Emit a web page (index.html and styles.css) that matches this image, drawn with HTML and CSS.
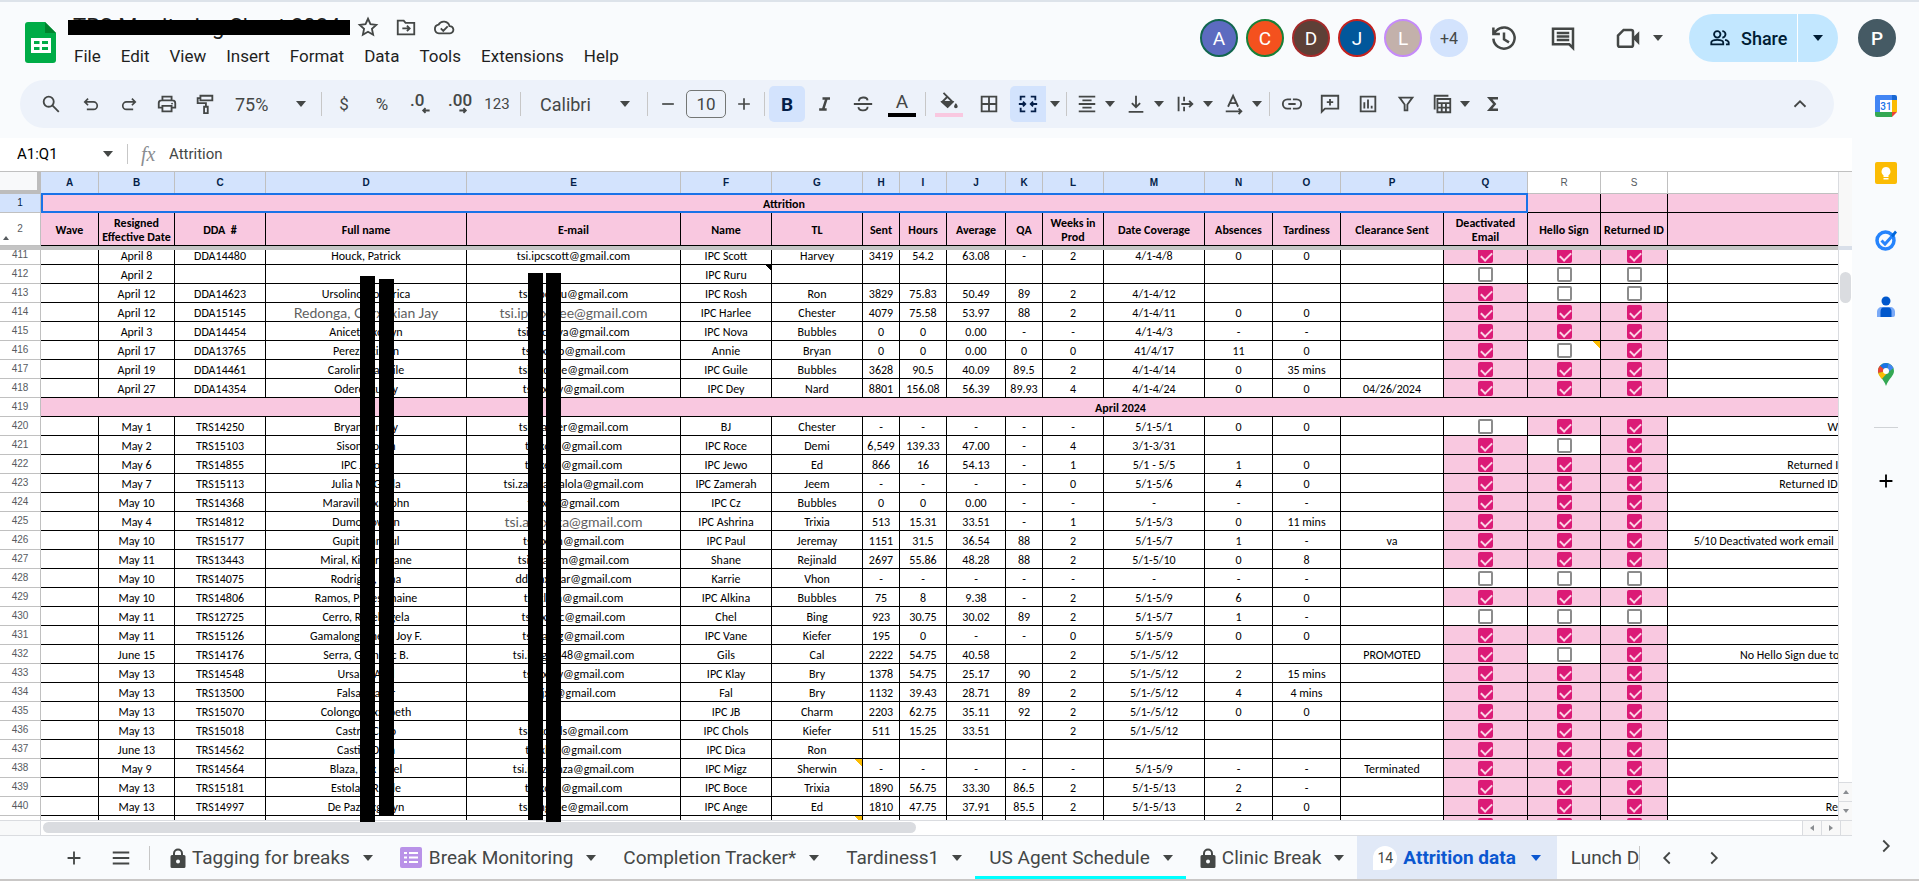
FILE: index.html
```html
<!DOCTYPE html>
<html lang="en">
<head>
  <meta charset="UTF-8" />
  <meta name="viewport" content="width=device-width, initial-scale=1.0"/>
  <title>TRS Monitoring Sheet 2024</title>
  <link rel="stylesheet" href="styles.css">
</head>
<body>

<svg class="sprite" aria-hidden="true">
  <symbol id="i-arrow" viewBox="0 0 10 6"><path d="M0 0h10L5 6z" fill="currentColor"/></symbol>
  <symbol id="i-search" viewBox="0 0 24 24"><circle cx="9.5" cy="9.5" r="5.5"/><path d="M13.5 13.5l7 7"/></symbol>
  <symbol id="i-undo" viewBox="0 0 24 24"><path d="M8.5 5.5l-4 4 4 4M5 9.5h10a4.5 4.5 0 0 1 0 9H7"/></symbol>
  <symbol id="i-redo" viewBox="0 0 24 24"><path d="M15.5 5.5l4 4-4 4M19 9.5H9a4.5 4.5 0 0 0 0 9h8"/></symbol>
  <symbol id="i-print" viewBox="0 0 24 24"><path d="M7 8V4h10v4M7 16H3v-5a3 3 0 0 1 3-3h12a3 3 0 0 1 3 3v5h-4M7 14h10v6H7z"/><circle cx="17.5" cy="11.5" r="1" fill="currentColor" stroke="none"/></symbol>
  <symbol id="i-paint" viewBox="0 0 24 24"><path d="M7 3h13v5H7zM7 5.5H4V11h9v4M11 15h4v7h-4z"/></symbol>
  <symbol id="i-minus" viewBox="0 0 24 24"><path d="M5 12h14"/></symbol>
  <symbol id="i-plus" viewBox="0 0 24 24"><path d="M5 12h14M12 5v14"/></symbol>
  <symbol id="i-dec" viewBox="0 0 24 24"><path d="M21 12H8M12 7l-5 5 5 5"/></symbol>
  <symbol id="i-inc" viewBox="0 0 24 24"><path d="M3 12h13M12 7l5 5-5 5"/></symbol>
  <symbol id="i-italic" viewBox="0 0 24 24"><path d="M9 5.5h9M5 18.5h9M14 5l-4.5 14" stroke-width="3"/></symbol>
  <symbol id="i-strike" viewBox="0 0 24 24"><path d="M2 12h20M7.5 9c0-5 9-5.5 9.5-1M7 15.5c.5 5 10 4.500 10-.5"/></symbol>
  <symbol id="i-fill" viewBox="0 0 24 24"><path d="M6 2l10 10-5.5 5.5L4.500 12l6-6"/><path d="M5 12h10.5l-5 5z" fill="currentColor"/><path d="M19.500 13s-2 2.500-2 3.800a2 2 0 0 0 4 0c0-1.300-2-3.800-2-3.800z" fill="currentColor" stroke="none"/></symbol>
  <symbol id="i-borders" viewBox="0 0 24 24"><path d="M4 4h16v16H4zM12 4v16M4 12h16"/></symbol>
  <symbol id="i-merge" viewBox="0 0 24 24"><path d="M9 4H4v4M4 16v4h5M15 4h5v4M20 16v4h-5M2 12h7M6.500 9.500L9 12l-2.500 2.500M22 12h-7M17.500 9.500L15 12l2.500 2.500"/></symbol>
  <symbol id="i-align" viewBox="0 0 24 24"><path d="M3 4h18M7 8h10M3 12h18M7 16h10M3 20h18"/></symbol>
  <symbol id="i-valign" viewBox="0 0 24 24"><path d="M12 3v12M7.500 11l4.500 4.500 4.500-4.500M4 20.500h16"/></symbol>
  <symbol id="i-wrap" viewBox="0 0 24 24"><path d="M5 4v16M11 4v5M11 15v5M8 12h12M16.500 8.500L20 12l-3.500 3.500"/></symbol>
  <symbol id="i-rotate" viewBox="0 0 24 24"><path d="M5.500 15L11 3l5.500 12M7.500 11h7M3 20h17M17 17l3 3-3 3"/></symbol>
  <symbol id="i-link" viewBox="0 0 24 24"><path d="M11 7H7a5 5 0 0 0 0 10h4M13 7h4a5 5 0 0 1 0 10h-4M8 12h8"/></symbol>
  <symbol id="i-addnote" viewBox="0 0 24 24"><path d="M3 20.500V3h18v14H6.500zM12 6.500v7M8.500 10h7"/></symbol>
  <symbol id="i-chart" viewBox="0 0 24 24"><path d="M4 4h16v16H4zM8 10v7M12 7v10M16 14v3"/></symbol>
  <symbol id="i-filter" viewBox="0 0 24 24"><path d="M5 5h14l-5.500 7.500V19h-3v-6.500z"/></symbol>
  <symbol id="i-views" viewBox="0 0 24 24"><path d="M4 18V3h15M7 6.500h14V21H7zM7 11h14M7 16h14M11.700 11v10M16.300 11v10"/></symbol>
  <symbol id="i-sigma" viewBox="0 0 24 24"><path d="M18 5H8l6 7-6 7h10" stroke-width="3"/></symbol>
  <symbol id="i-up" viewBox="0 0 24 24"><path d="M6 15l6-6 6 6"/></symbol>
  <symbol id="i-left" viewBox="0 0 24 24"><path d="M15 6l-6 6 6 6"/></symbol>
  <symbol id="i-right" viewBox="0 0 24 24"><path d="M9 6l6 6-6 6"/></symbol>
  <symbol id="i-star" viewBox="0 0 24 24"><path d="M12 3l2.700 6 6.300.7-4.700 4.300 1.300 6.400L12 17.200l-5.600 3.200L7.700 14 3 9.700 9.300 9z"/></symbol>
  <symbol id="i-folder" viewBox="0 0 24 24"><path d="M3 5h6.500l2 2.500H21V20H3zM8 13.500h8M13 10.500l3 3-3 3"/></symbol>
  <symbol id="i-cloud" viewBox="0 0 24 24"><path d="M6.500 19a4.800 4.800 0 0 1-.5-9.500A6.500 6.500 0 0 1 18 11a4 4 0 0 1 .5 8zM8.500 13.500l2.700 2.700 4.800-4.800"/></symbol>
  <symbol id="i-history" viewBox="0 0 24 24"><path d="M3.500 12.500a8.500 8.500 0 1 0 2.300-6.300L3.500 8.500M3.500 3.500v5.200h5.200M12 7.500V13l4 2.500"/></symbol>
  <symbol id="i-comment" viewBox="0 0 24 24"><path d="M4 4.500h16V20l-3-3H4zM7 8h10M7 10.800h10M7 13.600h10"/></symbol>
  <symbol id="i-video" viewBox="0 0 24 24"><path d="M8.500 5.500h6A1.500 1.500 0 0 1 16 7v10.500a1.500 1.500 0 0 1-1.500 1.500h-9A1.500 1.500 0 0 1 4 17.500V10z"/><path d="M16.500 11l4.500-4.500v11L16.500 13z" fill="currentColor" stroke="none"/></symbol>
  <symbol id="i-people" viewBox="0 0 24 24"><circle cx="9" cy="8" r="3.500"/><path d="M2.500 19v-2c0-4 13-4 13 0v2zM14.500 4.500a3.500 3.500 0 0 1 0 7M17.500 14c3 .7 4 1.500 4 3v2h-3"/></symbol>
  <symbol id="i-menu" viewBox="0 0 24 24"><path d="M3 6h18M3 12h18M3 18h18"/></symbol>
  <symbol id="i-lock" viewBox="0 0 16 20"><path d="M4 8V5.500a4 4 0 0 1 8 0V8" fill="none" stroke="currentColor" stroke-width="2"/><path fill="currentColor" fill-rule="evenodd" d="M2 7h12a1.500 1.500 0 0 1 1.500 1.500v10A1.500 1.500 0 0 1 14 20H2a1.500 1.500 0 0 1-1.500-1.500v-10A1.500 1.500 0 0 1 2 7zm6 4.500a2 2 0 1 0 0 4 2 2 0 0 0 0-4z"/></symbol>
</svg>

<header class="header">
  <svg class="logo" viewBox="0 0 31 41" role="img" aria-label="Sheets home">
    <path d="M3 0h17l11 11v27a3 3 0 0 1-3 3H3a3 3 0 0 1-3-3V3a3 3 0 0 1 3-3z" fill="#00ac47"/>
    <path d="M20 0l11 11H20z" fill="#00832d"/>
    <path d="M6 16h20v15H6zm3 3v3h5.500v-3zm8 0v3H23v-3zm-8 6v3h5.500v-3zm8 0v3H23v-3z" fill="#fff" fill-rule="evenodd"/>
  </svg>
  <div class="doc">
    <div class="title-row">
      <h1 class="title">TRS Monitoring Sheet 2024</h1>
      <button class="plain" aria-label="Star"><svg class="icon"><use href="#i-star"/></svg></button>
      <button class="plain" aria-label="Move"><svg class="icon"><use href="#i-folder"/></svg></button>
      <button class="plain" aria-label="Document status"><svg class="icon"><use href="#i-cloud"/></svg></button>
    </div>
    <nav class="menu">
      <button>File</button>
      <button>Edit</button>
      <button>View</button>
      <button>Insert</button>
      <button>Format</button>
      <button>Data</button>
      <button>Tools</button>
      <button>Extensions</button>
      <button>Help</button>
    </nav>
  </div>
  <div class="people">
    <span class="avatar indigo">A</span>
    <span class="avatar orange">C</span>
    <span class="avatar brown">D</span>
    <span class="avatar blue">J</span>
    <span class="avatar taupe">L</span>
    <span class="avatar more">+4</span>
  </div>
  <div class="actions">
    <button class="plain" aria-label="Version history"><svg class="icon big"><use href="#i-history"/></svg></button>
    <button class="plain" aria-label="Comments"><svg class="icon big"><use href="#i-comment"/></svg></button>
    <button class="plain call" aria-label="Join a call"><svg class="icon big"><use href="#i-video"/></svg><svg class="arrow"><use href="#i-arrow"/></svg></button>
  </div>
  <div class="share">
    <button class="share-main"><svg class="icon"><use href="#i-people"/></svg>Share</button>
    <button class="share-more" aria-label="Share options"><svg class="arrow"><use href="#i-arrow"/></svg></button>
  </div>
  <button class="avatar profile" aria-label="Account">P</button>
</header>

<div class="layout">
  <main class="main">
    <div class="toolbar" role="toolbar">
      <button class="tool wide" aria-label="Search menus"><svg class="icon"><use href="#i-search"/></svg></button>
      <button class="tool" aria-label="Undo"><svg class="icon small"><use href="#i-undo"/></svg></button>
      <button class="tool" aria-label="Redo"><svg class="icon small"><use href="#i-redo"/></svg></button>
      <button class="tool" aria-label="Print"><svg class="icon"><use href="#i-print"/></svg></button>
      <button class="tool" aria-label="Paint format"><svg class="icon"><use href="#i-paint"/></svg></button>
      <div class="select zoom">
        <select aria-label="Zoom"><option>75%</option><option>100%</option></select>
        <svg class="arrow"><use href="#i-arrow"/></svg>
      </div>
      <span class="sep"></span>
      <button class="tool" aria-label="Format as currency">$</button>
      <button class="tool" aria-label="Format as percent">%</button>
      <button class="tool decimal" aria-label="Decrease decimal places">.0<svg class="icon"><use href="#i-dec"/></svg></button>
      <button class="tool decimal" aria-label="Increase decimal places">.00<svg class="icon"><use href="#i-inc"/></svg></button>
      <button class="tool medium num" aria-label="More formats">123</button>
      <span class="sep"></span>
      <div class="select font">
        <select aria-label="Font"><option>Calibri</option><option>Arial</option></select>
        <svg class="arrow"><use href="#i-arrow"/></svg>
      </div>
      <span class="sep"></span>
      <button class="tool narrow" aria-label="Decrease font size"><svg class="icon small"><use href="#i-minus"/></svg></button>
      <input class="size" type="text" value="10" aria-label="Font size">
      <button class="tool narrow" aria-label="Increase font size"><svg class="icon small"><use href="#i-plus"/></svg></button>
      <span class="sep"></span>
      <button class="tool on bold" aria-label="Bold">B</button>
      <button class="tool" aria-label="Italic"><svg class="icon small"><use href="#i-italic"/></svg></button>
      <button class="tool" aria-label="Strikethrough"><svg class="icon"><use href="#i-strike"/></svg></button>
      <button class="tool medium swatch black" aria-label="Text color">A</button>
      <span class="sep"></span>
      <button class="tool medium swatch pink" aria-label="Fill color"><svg class="icon"><use href="#i-fill"/></svg></button>
      <button class="tool medium" aria-label="Borders"><svg class="icon"><use href="#i-borders"/></svg></button>
      <button class="tool on merge" aria-label="Merge cells"><svg class="icon"><use href="#i-merge"/></svg></button>
      <button class="tool drop" aria-label="Merge type"><svg class="arrow"><use href="#i-arrow"/></svg></button>
      <span class="sep"></span>
      <button class="tool combo" aria-label="Horizontal align"><svg class="icon"><use href="#i-align"/></svg><svg class="arrow"><use href="#i-arrow"/></svg></button>
      <button class="tool combo" aria-label="Vertical align"><svg class="icon"><use href="#i-valign"/></svg><svg class="arrow"><use href="#i-arrow"/></svg></button>
      <button class="tool combo" aria-label="Text wrapping"><svg class="icon"><use href="#i-wrap"/></svg><svg class="arrow"><use href="#i-arrow"/></svg></button>
      <button class="tool combo" aria-label="Text rotation"><svg class="icon"><use href="#i-rotate"/></svg><svg class="arrow"><use href="#i-arrow"/></svg></button>
      <span class="sep"></span>
      <button class="tool" aria-label="Insert link"><svg class="icon"><use href="#i-link"/></svg></button>
      <button class="tool" aria-label="Insert comment"><svg class="icon"><use href="#i-addnote"/></svg></button>
      <button class="tool" aria-label="Insert chart"><svg class="icon"><use href="#i-chart"/></svg></button>
      <button class="tool" aria-label="Create a filter"><svg class="icon"><use href="#i-filter"/></svg></button>
      <button class="tool combo" aria-label="Filter views"><svg class="icon"><use href="#i-views"/></svg><svg class="arrow"><use href="#i-arrow"/></svg></button>
      <button class="tool" aria-label="Functions"><svg class="icon small"><use href="#i-sigma"/></svg></button>
      <button class="tool collapse" aria-label="Hide the menus"><svg class="icon"><use href="#i-up"/></svg></button>
    </div>

    <div class="formula">
      <input class="name-box" type="text" value="A1:Q1" aria-label="Name box">
      <button class="plain" aria-label="Named ranges"><svg class="arrow"><use href="#i-arrow"/></svg></button>
      <span class="sep"></span>
      <label class="fx" for="fx">fx</label>
      <input class="fx-input" id="fx" type="text" value="Attrition">
    </div>

    <div class="sheet">
      <div class="grid">
        <table class="cells frozen" id="frozen"></table>
        <div class="freeze"></div>
        <div class="scroll">
          <table class="cells" id="rows"></table>
        </div>
      </div>
      <div class="vscroll">
        <div class="vtop"></div>
        <div class="vmark"></div>
        <div class="vtrack"><div class="vthumb"></div></div>
        <button class="step up" aria-label="Scroll up"></button>
        <button class="step down" aria-label="Scroll down"></button>
      </div>
      <span class="mark m1"></span>
      <span class="mark m2"></span>
      <span class="mark m3"></span>
      <span class="mark m4"></span>
    </div>

    <div class="hscroll">
      <div class="corner"></div>
      <div class="htrack"><div class="hthumb"></div></div>
      <button class="step prev" aria-label="Scroll left"></button>
      <button class="step next" aria-label="Scroll right"></button>
      <div class="end"></div>
    </div>

    <div class="tabs">
      <button class="plain add" aria-label="Add sheet"><svg class="icon"><use href="#i-plus"/></svg></button>
      <button class="plain all" aria-label="All sheets"><svg class="icon"><use href="#i-menu"/></svg></button>
      <span class="sep"></span>
      <div class="tab-list">
        <button class="tab"><svg class="lock"><use href="#i-lock"/></svg>Tagging for breaks<svg class="arrow"><use href="#i-arrow"/></svg></button>
        <button class="tab"><svg class="form" viewBox="0 0 22 21"><rect width="22" height="21" rx="2" fill="#b992e8"/><path d="M4 5h3v2H4zM9 5h9v2H9zM4 9.500h3v2H4zM9 9.500h9v2H9zM4 14h3v2H4zM9 14h9v2H9z" fill="#fff"/></svg>Break Monitoring<svg class="arrow"><use href="#i-arrow"/></svg></button>
        <button class="tab">Completion Tracker*<svg class="arrow"><use href="#i-arrow"/></svg></button>
        <button class="tab">Tardiness1<svg class="arrow"><use href="#i-arrow"/></svg></button>
        <button class="tab cyan">US Agent Schedule<svg class="arrow"><use href="#i-arrow"/></svg></button>
        <button class="tab"><svg class="lock"><use href="#i-lock"/></svg>Clinic Break<svg class="arrow"><use href="#i-arrow"/></svg></button>
        <button class="tab active"><span class="count">14</span>Attrition data<svg class="arrow"><use href="#i-arrow"/></svg></button>
        <button class="tab last">Lunch D</button>
      </div>
      <span class="sep"></span>
      <button class="plain" aria-label="Scroll tabs left"><svg class="icon"><use href="#i-left"/></svg></button>
      <button class="plain" aria-label="Scroll tabs right"><svg class="icon"><use href="#i-right"/></svg></button>
    </div>
  </main>

  <aside class="side">
    <a href="#calendar" aria-label="Calendar"><svg viewBox="0 0 24 24">
      <path d="M1 3a2 2 0 0 1 2-2h16v5H6v12H1z" fill="#4285f4"/>
      <path d="M18 1h3a2 2 0 0 1 2 2v3h-5z" fill="#1967d2"/>
      <path d="M18 6h5v12h-5z" fill="#fbbc04"/>
      <path d="M1 18h17v5H3a2 2 0 0 1-2-2z" fill="#34a853"/>
      <path d="M18 18h5l-5 5z" fill="#ea4335"/>
      <path d="M6 6h12v12H6z" fill="#fff"/>
      <text x="12" y="16" text-anchor="middle" font-size="10" font-family="Roboto, sans-serif" font-weight="500" fill="#1a73e8">31</text>
    </svg></a>
    <a href="#keep" aria-label="Keep"><svg viewBox="0 0 24 24">
      <rect x="1" y="1" width="22" height="22" rx="2" fill="#fbbc04"/>
      <path d="M12 6a4.500 4.500 0 0 0-2.500 8.200V16h5v-1.800A4.500 4.500 0 0 0 12 6zM9.500 17h5v1.500h-5z" fill="#fff"/>
    </svg></a>
    <a href="#tasks" aria-label="Tasks"><svg viewBox="0 0 24 24">
      <circle cx="11.500" cy="12.500" r="8.500" fill="none" stroke="#2684fc" stroke-width="3.500"/>
      <path d="M7.500 12.500l3.500 3.500 9-10" fill="none" stroke="#2684fc" stroke-width="3"/>
      <path d="M17 7.500L21 2.500l2 2-4 5z" fill="#0066da"/>
    </svg></a>
    <a href="#contacts" aria-label="Contacts"><svg viewBox="0 0 24 24">
      <circle cx="12" cy="6" r="4.500" fill="#0057cc"/>
      <path d="M3 22v-5c0-3 2-5 5-5h8c3 0 5 2 5 5v3a2 2 0 0 1-2 2z" fill="#7baaf7"/>
      <path d="M6.500 22v-5c0-3 1-4.500 3-4.500h5c2 0 3 1.500 3 4.500v5z" fill="#0057cc"/>
    </svg></a>
    <a href="#maps" aria-label="Maps"><svg viewBox="0 0 24 24">
      <path d="M12 1a8 8 0 0 1 8 8c0 5-5 7-8 15C10 17 4 14 4 9a8 8 0 0 1 8-8z" fill="#34a853"/>
      <path d="M12 9L6 4a8 8 0 0 1 8.500-2.500z" fill="#1a73e8"/>
      <path d="M14.500 1.500a8 8 0 0 1 5 4.500L12 12z" fill="#4285f4"/>
      <path d="M12 9L6 3.700A8 8 0 0 0 4.200 11z" fill="#ea4335"/>
      <path d="M12 9l-7.800 2c.5 2 2 4 3.600 6l6.500-7z" fill="#fbbc04"/>
      <circle cx="12" cy="9" r="3" fill="#fff"/>
    </svg></a>
    <hr>
    <button class="plain addon" aria-label="Get add-ons"><svg class="icon"><use href="#i-plus"/></svg></button>
    <button class="plain hide" aria-label="Hide side panel"><svg class="icon"><use href="#i-right"/></svg></button>
  </aside>
</div>

<script src="script.js"></script>
</body>
</html>
```
FILE: styles.css
```css
* {
  box-sizing: border-box;
}

body {
  margin: 0;
  height: 100vh;
  display: flex;
  flex-direction: column;
  overflow: hidden;
  background: #f9fbfd;
  border-top: 2px solid #dde3ea;
  border-bottom: 2px solid #c9c7c6;
  font-family: Roboto, Arial, sans-serif;
  color: #444746;
}

button, input, select {
  font: inherit;
  color: inherit;
  border: 0;
  padding: 0;
  background: none;
}

button {
  cursor: pointer;
}

.sprite {
  display: none;
}

.icon {
  width: 22px;
  height: 22px;
  flex: none;
  fill: none;
  stroke: currentColor;
  stroke-width: 2;
}

.icon.small {
  width: 20px;
  height: 20px;
}

.icon.big {
  width: 30px;
  height: 30px;
}

.arrow {
  width: 10px;
  height: 6px;
  flex: none;
}

.plain {
  display: flex;
  align-items: center;
  justify-content: center;
}

.sep {
  width: 1px;
  height: 24px;
  margin: 0 2px;
  flex: none;
  background: #c7c7c7;
}

/* header */
.header {
  display: flex;
  align-items: center;
  height: 78px;
  padding: 0 23px 6px 25px;
}

.logo {
  width: 31px;
  height: 41px;
  margin-top: 8px;
}

.doc {
  margin-left: 12px;
  padding-top: 8px;
}

.title-row {
  display: flex;
  align-items: center;
  gap: 16px;
  height: 24px;
}

.title {
  position: relative;
  width: 282px;
  margin: 0;
  padding-left: 5px;
  font-size: 22px;
  font-weight: 400;
  line-height: 26px;
  white-space: nowrap;
  color: #1f1f1f;
}

.title::after {
  content: "";
  position: absolute;
  inset: 6px 0 5px 0;
  background: #000;
}

.title + .plain {
  margin-left: -9px;
}

.menu {
  display: flex;
  gap: 20px;
  margin-top: 4px;
  padding-left: 6px;
  font-size: 17px;
  line-height: 26px;
  color: #1f1f1f;
}

.people {
  display: flex;
  gap: 8px;
  margin-left: auto;
}

.avatar {
  display: flex;
  align-items: center;
  justify-content: center;
  width: 38px;
  height: 38px;
  border: 2px solid;
  border-radius: 50%;
  font-size: 19px;
  color: #fff;
}

.indigo { background: #5c6bc0; border-color: #12664f; }
.orange { background: #f4511e; border-color: #188038; }
.brown { background: #5d4037; border-color: #a52a2a; }
.blue { background: #01579b; border-color: #c5221f; }
.taupe { background: #c3b1ab; border-color: #c58af9; }
.more { background: #d3e3fd; border-color: #d3e3fd; color: #444746; font-size: 16px; }
.profile { background: #455a64; border-color: #455a64; font-weight: 500; }

.actions {
  display: flex;
  gap: 29px;
  margin: 0 26px 0 21px;
}

.call {
  gap: 10px;
  margin-left: 6px;
}

.share {
  display: flex;
  height: 48px;
  margin-right: 20px;
  border-radius: 24px;
  background: #c2e7ff;
  color: #001d35;
}

.share-main {
  display: flex;
  align-items: center;
  gap: 10px;
  width: 109px;
  padding-left: 20px;
  border-right: 1px solid #fff;
  font-size: 18px;
  font-weight: 500;
}

.share-more {
  display: flex;
  align-items: center;
  justify-content: center;
  width: 40px;
}

/* toolbar */
.layout {
  display: flex;
  flex: 1;
  min-height: 0;
}

.main {
  display: flex;
  flex-direction: column;
  flex: 1;
  min-width: 0;
}

.toolbar {
  display: flex;
  align-items: center;
  gap: 2px;
  height: 48px;
  margin: 0 18px 10px 20px;
  padding: 0 16px 0 11px;
  flex: none;
  border-radius: 24px;
  background: #edf2fa;
  font-size: 17px;
}

.tool {
  display: flex;
  align-items: center;
  justify-content: center;
  width: 36px;
  height: 36px;
  flex: none;
  border-radius: 5px;
}

.wide { width: 40px; }
.medium { width: 38px; }
.narrow { width: 32px; }
.num { font-size: 15px; }

.on {
  background: #d3e3fd;
  color: #041e49;
}

.bold {
  font-size: 19px;
  font-weight: 700;
}

.merge {
  border-radius: 5px 0 0 5px;
}

.drop {
  width: 14px;
}

.combo {
  justify-content: flex-start;
  gap: 7px;
  width: 47px;
  padding-left: 5px;
}

.decimal {
  flex-direction: column;
  align-items: flex-start;
  padding-left: 8px;
  font-weight: 500;
  line-height: 14px;
}

.decimal .icon {
  width: 11px;
  height: 11px;
  margin: -2px 0 0 10px;
  stroke-width: 4;
}

.swatch {
  flex-direction: column;
  justify-content: flex-end;
  height: 26px;
  font-size: 19px;
  line-height: 22px;
}

.swatch::after {
  content: "";
  width: 28px;
  height: 4px;
  flex: none;
}

.black::after { background: #000; }
.pink::after { background: #f9c8e0; }

.select {
  display: flex;
  align-items: center;
  padding: 0 11px 0 10px;
}

.zoom { width: 92px; }
.font { width: 118px; padding: 0 13px 0 15px; }

.select select {
  flex: 1;
  min-width: 0;
  appearance: none;
  font-size: 18px;
}

.size {
  width: 40px;
  height: 28px;
  border: 1px solid #747775;
  border-radius: 5px;
  text-align: center;
}

.collapse {
  margin-left: auto;
}

/* formula bar */
.formula {
  display: flex;
  align-items: center;
  height: 34px;
  flex: none;
  padding-bottom: 2px;
  background: #fff;
  border-bottom: 1px solid #c0c0c0;
  font-size: 15px;
}

.name-box {
  width: 86px;
  margin-left: 17px;
  color: #000;
}

.formula .sep {
  height: 20px;
  margin: 0 13px 0 14px;
}

.fx {
  width: 28px;
  font: italic 20px/20px "Liberation Serif", serif;
  color: #8a8d91;
}

.fx-input {
  flex: 1;
}

/* sheet */
.sheet {
  position: relative;
  display: flex;
  flex: 1;
  min-height: 0;
  background: #fff;
}

.grid {
  display: flex;
  flex-direction: column;
  flex: 1;
  min-width: 0;
  overflow: hidden;
}

.scroll {
  flex: 1;
  min-height: 0;
  overflow: hidden;
}

/* scrolled 4px into the first row */
.scroll .cells {
  margin-top: -4px;
}

.cells {
  width: 2201px;
  table-layout: fixed;
  border-collapse: separate;
  border-spacing: 0;
  flex: none;
  font-family: Calibri, Lato, sans-serif;
  font-size: 12px;
  line-height: 14px;
  color: #000;
}

.cells td {
  height: 19px;
  padding: 2px 0 0;
  border-right: 1px solid #000;
  border-bottom: 1px solid #000;
  text-align: center;
  white-space: nowrap;
}

.cells th {
  height: 19px;
  padding: 0;
  border-right: 1px solid #c0c0c0;
  border-bottom: 1px solid #c0c0c0;
  background: #fff;
  font: 10px/14px "Liberation Sans", Arial, sans-serif;
  color: #575b5f;
}

.frozen thead th {
  height: 22px;
}

.frozen thead .sel,
.frozen .sel {
  background: #d3e3fd;
  color: #041e49;
  font-weight: 700;
}

.frozen tbody .sel {
  font-weight: 400;
}

.frozen thead .origin {
  background: #f8f9fa;
  border-right: 4px solid #bdbdbd;
  border-bottom: 4px solid #bdbdbd;
}

.frozen td {
  background: #f9c8e0;
  font-weight: 700;
}

.frozen .names td,
.frozen .names th {
  height: 33px;
}

.frozen .names td {
  white-space: pre;
}

.frozen .names th {
  position: relative;
}

.frozen .names th::after {
  content: "";
  position: absolute;
  left: 3px;
  bottom: 5px;
  border: 3px solid transparent;
  border-top: 0;
  border-bottom: 4px solid #575b5f;
}

.frozen .range {
  position: relative;
}

.range::after {
  content: "";
  position: absolute;
  inset: -1px -1px -1px 0;
  border: 2px solid #1a73e8;
}

.freeze {
  height: 4px;
  flex: none;
  background: #c4c4c4;
}

.cells .month {
  background: #f9c8e0;
  font-weight: 700;
}

.cells .other {
  font-family: Lato, sans-serif;
  font-size: 14px;
  color: #5f5f5f;
}

.cells .box {
  padding: 0;
  line-height: 0;
}

.cells .done {
  background: #f9c8e0;
}

.cells .note {
  background-image: linear-gradient(225deg, #fbbc04 5px, transparent 5px);
}

.cells .comment {
  background-image: linear-gradient(225deg, #000 4px, transparent 4px);
}

.box input {
  appearance: none;
  position: relative;
  width: 15px;
  height: 15px;
  margin: 0;
  border: 2px solid #8c8c8c;
  border-radius: 2px;
  background: #fff;
  vertical-align: middle;
}

.box input:checked {
  border-color: #db1a76;
  background: #db1a76;
}

.box input:checked::after {
  content: "";
  position: absolute;
  left: 3px;
  top: 0;
  width: 5px;
  height: 9px;
  border: solid #fbd3e6;
  border-width: 0 2px 2px 0;
  transform: rotate(45deg);
}

/* black marker strokes over the names */
.mark {
  position: absolute;
  width: 15px;
  background: #000;
}

.m1 { left: 360px; top: 104px; bottom: -2px; }
.m2 { left: 379px; top: 107px; bottom: 4px; }
.m3 { left: 528px; top: 101px; bottom: 0; }
.m4 { left: 546px; top: 101px; bottom: -2px; }

/* scrollbars */
.vscroll {
  display: flex;
  flex-direction: column;
  width: 14px;
  flex: none;
  border-left: 1px solid #dadce0;
}

.vtop {
  height: 74px;
  background: #f8f8f8;
}

.vmark {
  height: 4px;
  background: #d9dfe9;
}

.vtrack {
  flex: 1;
  padding: 22px 1px 0;
}

.vthumb {
  height: 31px;
  border-radius: 6px;
  background: #dadce0;
}

.step {
  position: relative;
  display: flex;
  align-items: center;
  justify-content: center;
  width: 13px;
  height: 19px;
  flex: none;
  border-top: 1px solid #dadce0;
  background: #f8f8f8;
}

.step::after {
  content: "";
  border: 3px solid transparent;
}

.up::after { border-top: 0; border-bottom: 4px solid #8a8d91; }
.down::after { border-bottom: 0; border-top: 4px solid #8a8d91; }
.prev::after { border-left: 0; border-right: 4px solid #8a8d91; }
.next::after { border-right: 0; border-left: 4px solid #8a8d91; }

.hscroll {
  display: flex;
  height: 16px;
  flex: none;
  border-top: 1px solid #dadce0;
  border-bottom: 1px solid #dadce0;
  background: #fff;
}

.hscroll .step {
  width: 19px;
  height: 14px;
  border-top: 0;
  border-left: 1px solid #dadce0;
}

.corner {
  width: 41px;
  border-right: 1px solid #dadce0;
  background: #f8f9fa;
}

.htrack {
  flex: 1;
  padding: 1px 2px;
}

.hthumb {
  width: 873px;
  height: 11px;
  border-radius: 6px;
  background: #dadce0;
}

.end {
  width: 12px;
  border-left: 1px solid #dadce0;
  background: #f8f8f8;
}

/* sheet tabs */
.tabs {
  display: flex;
  align-items: center;
  height: 43px;
  flex: none;
  padding-left: 62px;
}

.tabs .add,
.tabs .all {
  width: 24px;
  margin-right: 23px;
}

.tabs .all {
  margin-right: 14px;
}

.tab-list {
  display: flex;
  align-self: stretch;
  min-width: 0;
  margin-left: 4px;
  overflow: hidden;
}

.tab {
  display: flex;
  align-items: center;
  flex: none;
  padding: 0 13px 0 14px;
  font-size: 19px;
  white-space: nowrap;
}

.last {
  padding-right: 0;
}

.tab .arrow {
  margin-left: 13px;
}

.lock {
  width: 16px;
  height: 20px;
  margin-right: 6px;
}

.form {
  width: 22px;
  height: 21px;
  margin-right: 7px;
}

.cyan {
  border-bottom: 3px solid #00ffff;
  padding-top: 3px;
}

.active {
  padding: 0 16px;
  background: #e1e9f7;
  color: #0b57d0;
  font-weight: 700;
}

.active .arrow {
  margin-left: 15px;
}

.count {
  width: 24px;
  height: 24px;
  margin-right: 6px;
  border-radius: 12px 12px 12px 0;
  background: #fff;
  color: #444746;
  font-size: 14px;
  font-weight: 400;
  line-height: 24px;
}

.tab-list + .sep {
  margin: 0 16px 0 0;
}

.tabs > .plain:last-child {
  margin-left: 25px;
}

/* side panel */
.side {
  display: flex;
  flex-direction: column;
  align-items: center;
  gap: 43px;
  width: 67px;
  padding: 14px 0 22px;
}

.side a,
.side a svg {
  display: block;
  width: 24px;
  height: 24px;
}

.side hr {
  width: 24px;
  margin: -2px 0 -1px;
  border: 0;
  border-top: 1px solid #d0d3d6;
}

.addon {
  color: #000;
}

.hide {
  margin-top: auto;
}
```
FILE: script.js
```js
const widths = [41, 58, 76, 91, 201, 214, 91, 91, 37, 47, 59, 37, 61, 101, 68, 68, 103, 84, 73, 67, 533];
const letters = [..."ABCDEFGHIJKLMNOPQRS", ""];
const names = ["Wave", "Resigned\nEffective Date", "DDA  #", "Full name", "E-mail", "Name", "TL", "Sent", "Hours",
  "Average", "QA", "Weeks in\nProd", "Date Coverage", "Absences", "Tardiness", "Clearance Sent",
  "Deactivated\nEmail", "Hello Sign", "Returned ID", ""];

// row | date | id | full name | e-mail | name | TL | sent | hours | average | QA | weeks | coverage | absences | tardiness | clearance | boxes | remarks
// "~" in front: pasted in another font, "!" at the end: note marker, "^" at the end: comment marker
const data = `
411|April 8|DDA14480|Houck, Patrick|tsi.ipcscott@gmail.com|IPC Scott|Harvey|3419|54.2|63.08|-|2|4/1-4/8|0|0||111|
412|April 2||||IPC Ruru^|||||||||||000|
413|April 12|DDA14623|Ursolino, xos Erica|tsi.xposxu@gmail.com|IPC Rosh|Ron|3829|75.83|50.49|89|2|4/1-4/12||||100|
414|April 12|DDA15145|~Redonga, Chrxxxian Jay|~tsi.ipcxxxlee@gmail.com|IPC Harlee|Chester|4079|75.58|53.97|88|2|4/1-4/11|0|0||111|
415|April 3|DDA14454|Aniceto, xoxlyn|tsi.xxcxxva@gmail.com|IPC Nova|Bubbles|0|0|0.00|-|-|4/1-4/3|-|-||111|
416|April 17|DDA13765|Perez, xxix nn|tsi.xxnxp@gmail.com|Annie|Bryan|0|0|0.00|0|0|41/4/17|11|0||10!1|
417|April 19|DDA14461|Carolino, ar uile|tsi.xxcxxle@gmail.com|IPC Guile|Bubbles|3628|90.5|40.09|89.5|2|4/1-4/14|0|35 mins||111|
418|April 27|DDA14354|Odero, xuxey|tsi.xxcxy@gmail.com|IPC Dey|Nard|8801|156.08|56.39|89.93|4|4/1-4/24|0|0|04/26/2024|111|
419|April 2024
420|May 1|TRS14250|Bryan xxnxdy|tsi.xjaxxer@gmail.com|BJ|Chester|-|-|-|-|-|5/1-5/1|0|0||011|With pending hello sign, for follow up today
421|May 2|TRS15103|Sison, xocxn|tsi.xoxy@gmail.com|IPC Roce|Demi|6,549|139.33|47.00|-|4|3/1-3/31||||101|
422|May 6|TRS14855|IPC Jexoxd|tsi.xexo@gmail.com|IPC Jewo|Ed|866|16|54.13|-|1|5/1 - 5/5|1|0||111|Returned ID to the office, deactivated email and all accounts
423|May 7|TRS15113|Julia Mx Gxola|tsi.zamxaxgalola@gmail.com|IPC Zamerah|Jeem|-|-|-|-|0|5/1-5/6|4|0||111|Returned ID to the office, deactivated work email and accounts.
424|May 10|TRS14368|Maravilla, xa John|tsi.xpx@gmail.com|IPC Cz|Bubbles|0|0|0.00|-|-|-|-|-||111|
425|May 4|TRS14812|Dumol, ow yn|~tsi.axxxrxa@gmail.com|IPC Ashrina|Trixia|513|15.31|33.51|-|1|5/1-5/3|0|11 mins||111|
426|May 10|TRS15177|Gupit, xan aul|tsi.xxam@gmail.com|IPC Paul|Jeremay|1151|31.5|36.54|88|2|5/1-5/7|1|-|va|111|5/10 Deactivated work email | 5/10 Deactivated accounts | 5/10 Returned the ID to the office | Ok
427|May 11|TRS13443|Miral, Kimxr Shane|tsi.xxaxxm@gmail.com|Shane|Rejinald|2697|55.86|48.28|88|2|5/1-5/10|0|8||111|
428|May 10|TRS14075|Rodrigux, xsha|ddaxaxxear@gmail.com|Karrie|Vhon|-|-|-|-|-|-|-|-||000|
429|May 10|TRS14806|Ramos, Prixes Shaine|tsi.xlxxa@gmail.com|IPC Alkina|Bubbles|75|8|9.38|-|2|5/1-5/9|6|0||111|
430|May 11|TRS12725|Cerro, Raxel ngela|tsi.xxcxlc@gmail.com|Chel|Bing|923|30.75|30.02|89|2|5/1-5/7|1|-||000|
431|May 11|TRS15126|Gamalong, xnexa Joy F.|tsi.xaxxg@gmail.com|IPC Vane|Kiefer|195|0|-|-|0|5/1-5/9|0|0||111|
432|June 15|TRS14176|Serra, Gilxn arc B.|tsi.ipxgix748@gmail.com|Gils|Cal|2222|54.75|40.58||2|5/1-/5/12|||PROMOTED|101|No Hello Sign due to promotion, transferred to another account effective June 1
433|May 13|TRS14548|Ursale, Axel|tsi.xxcxy@gmail.com|IPC Klay|Bry|1378|54.75|25.17|90|2|5/1-/5/12|2|15 mins||111|
434|May 13|TRS13500|Falsari Jaxer|xxjxx@gmail.com|Fal|Bry|1132|39.43|28.71|89|2|5/1-/5/12|4|4 mins||111|
435|May 13|TRS15070|Colongon, xxebeth||IPC JB|Charm|2203|62.75|35.11|92|2|5/1-/5/12|0|0||111|
436|May 13|TRS15018|Castro, Chxo|tsi.xxcxols@gmail.com|IPC Chols|Kiefer|511|15.25|33.51||2|5/1-/5/12||||111|
437|June 13|TRS14562|Castill, Dxxa|tsi.xlixc@gmail.com|IPC Dica|Ron||||||||||111|
438|May 9|TRS14564|Blaza, Jux iguel|tsi.mxzxxaza@gmail.com|IPC Migz|Sherwin!|-|-|-|-|-|5/1-5/9|-|-|Terminated|111|
439|May 13|TRS15181|Estolan, Rxelle|tsi.xoxe@gmail.com|IPC Boce|Trixia|1890|56.75|33.30|86.5|2|5/1-5/13|2|-||111|
440|May 13|TRS14997|De Paz, xxgxllyn|tsi.xngxee@gmail.com|IPC Ange|Ed|1810|47.75|37.91|85.5|2|5/1-5/13|2|0||111|Resigned effective May 13, 2024, work email
441||||||!||||||||||111|`;

const cols = "<colgroup>" + widths.map(w => `<col style="width:${w}px">`).join("") + "</colgroup>";

function textCell(text = "") {
  const cls = [];
  if (text.startsWith("~")) { cls.push("other"); text = text.slice(1); }
  if (text.endsWith("!")) { cls.push("note"); text = text.slice(0, -1); }
  if (text.endsWith("^")) { cls.push("comment"); text = text.slice(0, -1); }
  return `<td class="${cls.join(" ")}">${text}</td>`;
}

function boxCells(code, row) {
  const labels = ["Deactivated Email", "Hello Sign", "Returned ID"];
  return (code.match(/[01]!?/g) || []).map((c, i) => {
    const on = c[0] === "1";
    return `<td class="box${on ? " done" : ""}${c[1] ? " note" : ""}"><input type="checkbox" aria-label="${labels[i]} ${row}"${on ? " checked" : ""}></td>`;
  }).join("");
}

document.getElementById("frozen").innerHTML = cols +
  `<thead><tr><th class="origin"></th>${letters.map((l, i) => `<th class="${i < 17 ? "sel" : ""}">${l}</th>`).join("")}</tr></thead>
  <tbody>
    <tr><th class="sel">1</th><td class="range" colspan="17">Attrition</td><td></td><td></td><td></td></tr>
    <tr class="names"><th>2</th>${names.map(n => `<td>${n}</td>`).join("")}</tr>
  </tbody>`;

document.getElementById("rows").innerHTML = cols + "<tbody>" + data.trim().split("\n").map(line => {
  const f = line.split("|");
  if (f.length === 2) {
    return `<tr><th>${f[0]}</th><td class="month" colspan="20">${f[1]}</td></tr>`;
  }
  const remarks = f.slice(17).join("|");
  return `<tr><th>${f[0]}</th><td></td>${f.slice(1, 16).map(textCell).join("")}${boxCells(f[16], f[0])}<td>${remarks}</td></tr>`;
}).join("") + "</tbody>";
```
